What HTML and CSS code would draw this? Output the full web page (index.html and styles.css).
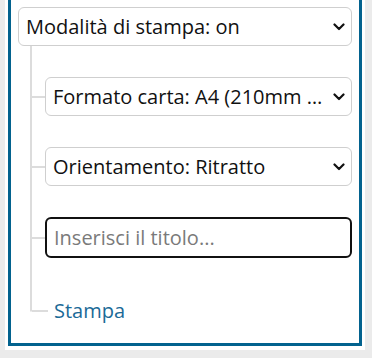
FILE: index.html
```html
<!DOCTYPE html>
<html lang="it">
<head>
<meta charset="utf-8">
<link rel="stylesheet" href="styles.css">
</head>
<body>
<div class="sheet">
  <div class="panel">
    <div class="tree">
      <div class="select-wrap">
        <select class="field">
          <option>Modalità di stampa: on</option>
          <option>Modalità di stampa: off</option>
        </select>
        <svg class="chevron" width="12" height="8" viewBox="0 0 12 8"><path d="M1.5 1.5 L6 6 L10.5 1.5" fill="none" stroke="#111" stroke-width="2.2" stroke-linecap="round" stroke-linejoin="round"/></svg>
      </div>
      <ul class="branches">
        <li class="branch">
          <div class="select-wrap">
            <select class="field">
              <option>Formato carta: A4 (210mm x 297mm)</option>
            </select>
            <svg class="chevron" width="12" height="8" viewBox="0 0 12 8"><path d="M1.5 1.5 L6 6 L10.5 1.5" fill="none" stroke="#111" stroke-width="2.2" stroke-linecap="round" stroke-linejoin="round"/></svg>
          </div>
        </li>
        <li class="branch">
          <div class="select-wrap">
            <select class="field">
              <option>Orientamento: Ritratto</option>
              <option>Orientamento: Paesaggio</option>
            </select>
            <svg class="chevron" width="12" height="8" viewBox="0 0 12 8"><path d="M1.5 1.5 L6 6 L10.5 1.5" fill="none" stroke="#111" stroke-width="2.2" stroke-linecap="round" stroke-linejoin="round"/></svg>
          </div>
        </li>
        <li class="branch">
          <input class="field title-input" type="text" placeholder="Inserisci il titolo...">
        </li>
        <li class="branch last">
          <a class="print-link" href="#">Stampa</a>
        </li>
      </ul>
    </div>
  </div>
</div>
</body>
</html>
```
FILE: styles.css
```css
html, body {
  margin: 0;
  padding: 0;
  background: #ebebeb;
}
body {
  font-family: "Open Sans", "Liberation Sans", sans-serif;
  font-size: 20px;
  color: #111;
}
.sheet {
  margin: 0 7px 7px 5px;
  padding: 0 3px 4px 3px;
  background: #fff;
}
.panel {
  border: 3px solid #02628e;
  border-top: none;
  padding: 7px 7px 19px 7px;
}
.tree {
  display: flex;
  flex-direction: column;
}
.select-wrap {
  position: relative;
  flex: 1;
  display: flex;
}
.chevron {
  position: absolute;
  right: 7px;
  top: 16px;
  pointer-events: none;
}
.field {
  box-sizing: border-box;
  width: 100%;
  height: 39px;
  font-family: inherit;
  font-size: 20px;
  color: #111;
  background: #fff;
  border: 1px solid #cfcfcf;
  border-radius: 6px;
  padding: 0 28px 0 7px;
  text-overflow: ellipsis;
  appearance: none;
  -webkit-appearance: none;
  outline: none;
}
.branches {
  list-style: none;
  margin: 0 0 0 12px;
  padding: 0;
}
.branch {
  display: flex;
  align-items: center;
  padding-top: 31px;
  border-left: 2px solid #dcdcdc;
}
.branch::before {
  content: "";
  flex: 0 0 13px;
  height: 2px;
  background: #dcdcdc;
}
.branch.last {
  border-left: none;
  padding-left: 2px;
  padding-top: 39px;
  background: linear-gradient(#dcdcdc, #dcdcdc) no-repeat 0 0 / 2px calc(50% + 20.5px);
}
.branch.last::before {
  flex-basis: 16px;
}
.title-input {
  height: 41px;
  border: 2px solid #111;
  padding: 0 7px;
}
.title-input::placeholder {
  color: #7a7a7a;
}
.print-link {
  margin-left: 6px;
  color: #1b6a97;
  text-decoration: none;
  line-height: 27px;
}
```
